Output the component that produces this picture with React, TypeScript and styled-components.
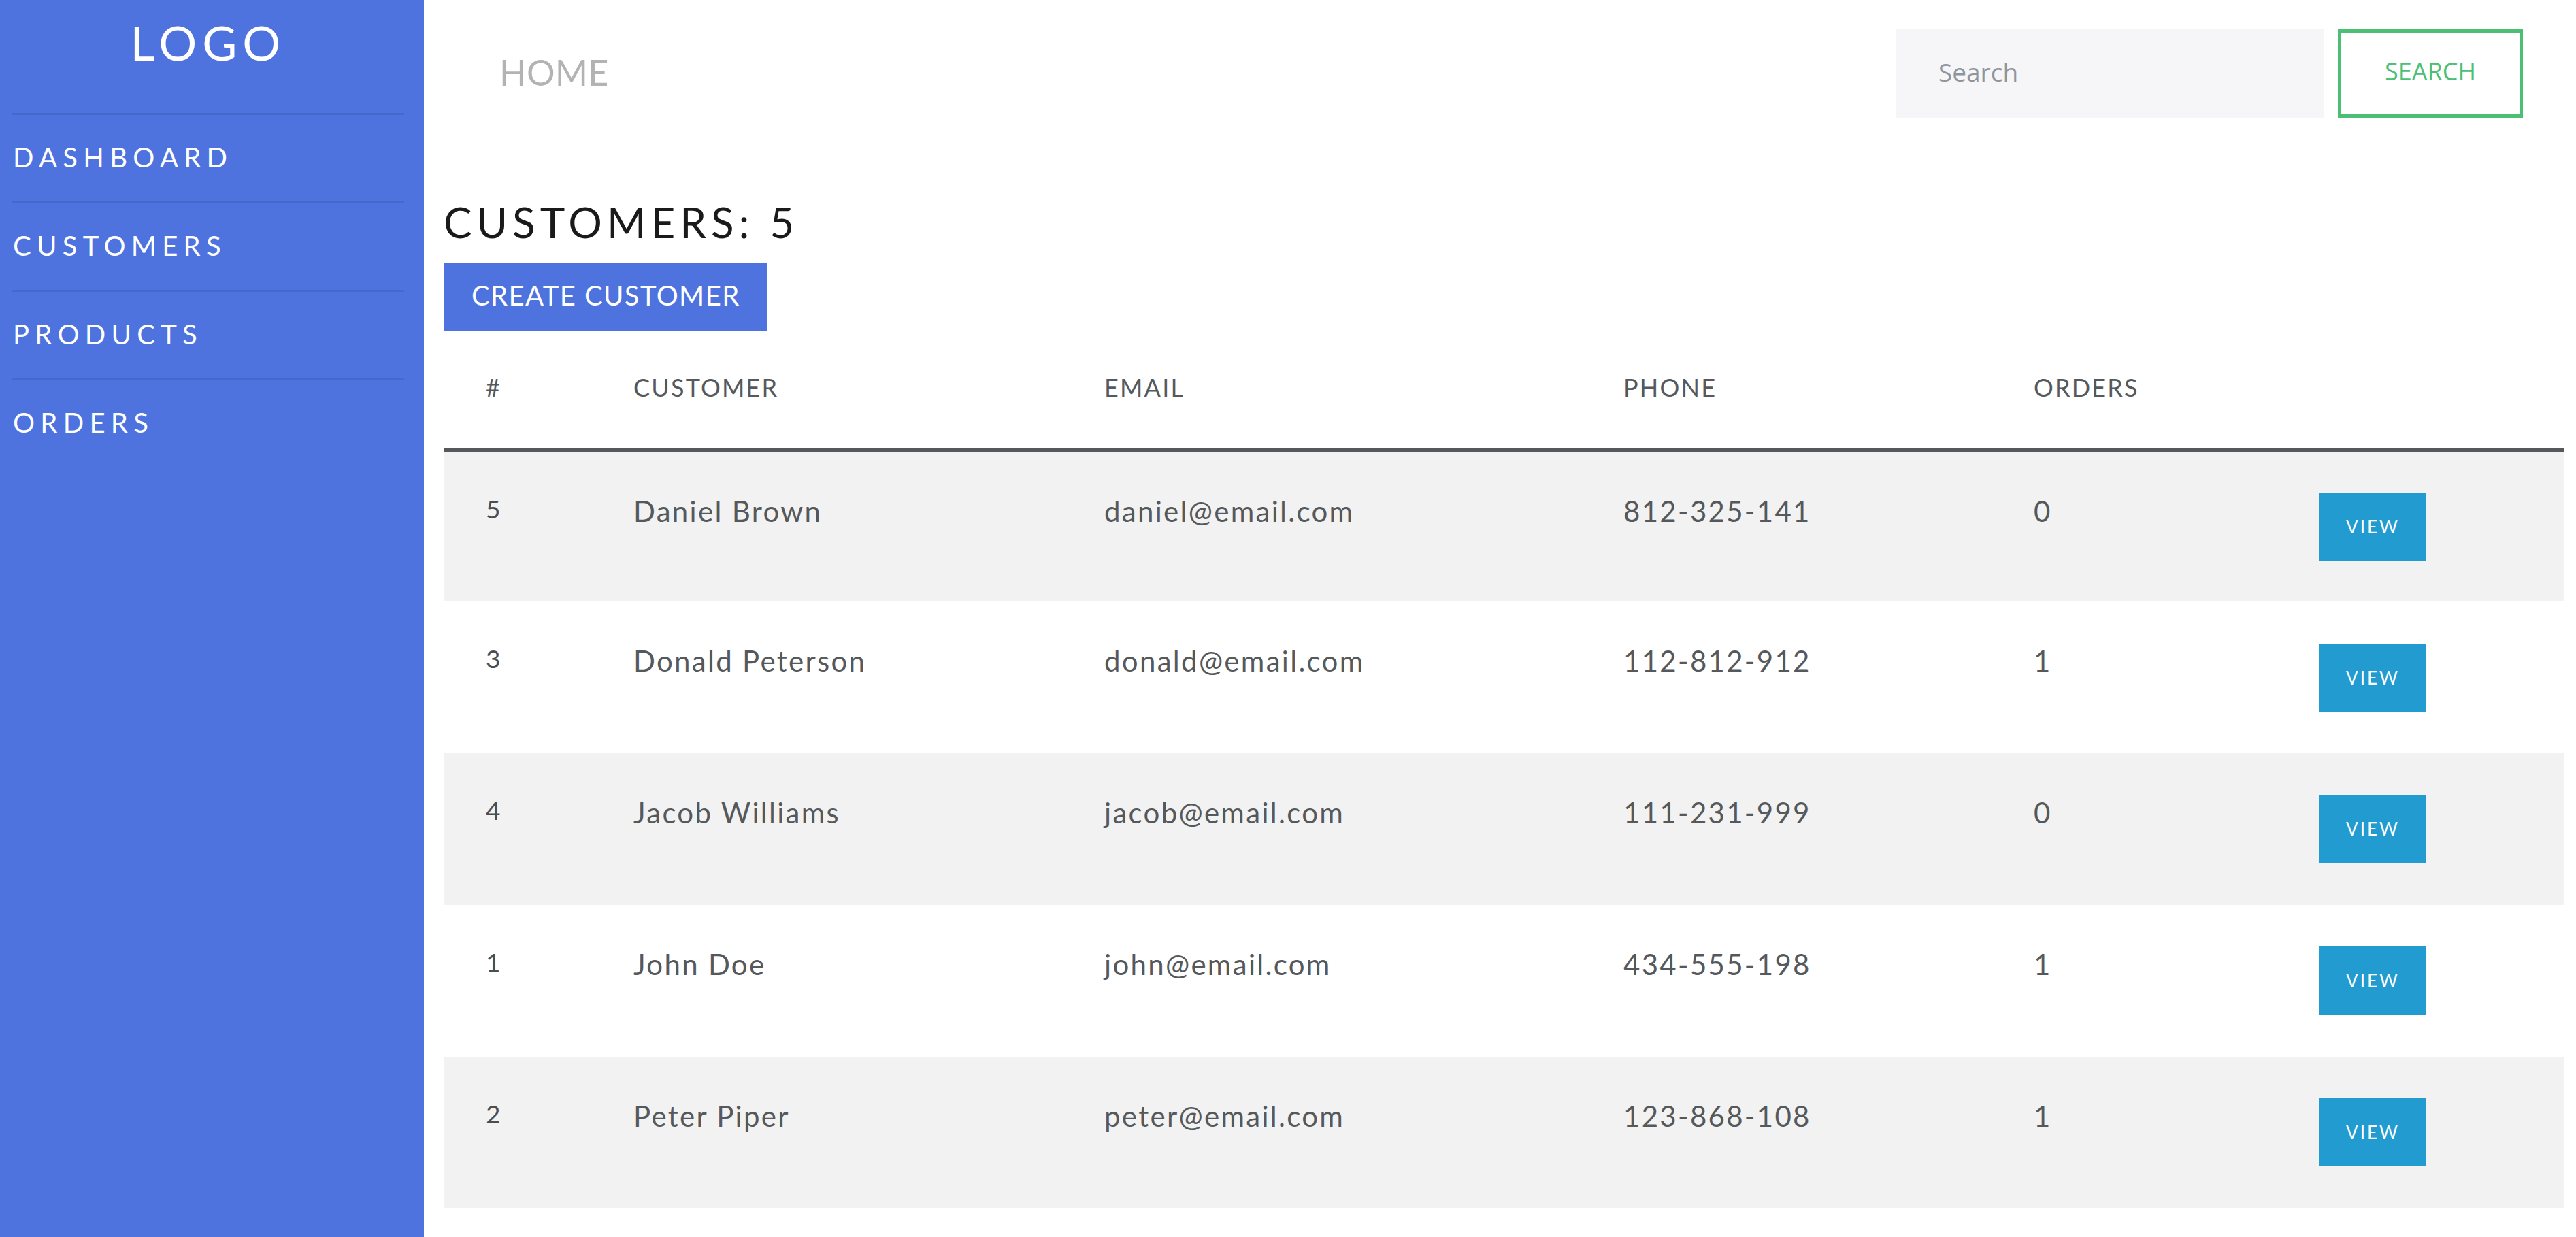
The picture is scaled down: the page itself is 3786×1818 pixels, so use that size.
import React from "react";
import styled, { createGlobalStyle } from "styled-components";

const GlobalStyle = createGlobalStyle`
  html, body {
    margin: 0;
    padding: 0;
    background: #ffffff;
  }
  body {
    font-family: Lato, "Open Sans", sans-serif;
    color: #55595c;
  }
  * { box-sizing: border-box; }
`;

const Layout = styled.div`
  display: flex;
  min-height: 100vh;
`;

const Sidebar = styled.aside`
  width: 623px;
  flex-shrink: 0;
  background: #4e73df;
  padding: 0 29px 0 18px;
`;

const Logo = styled.div`
  height: 166px;
  padding-top: 20px;
  text-align: center;
  font-size: 70px;
  line-height: 84px;
  letter-spacing: 8px;
  color: #ffffff;
`;

const NavList = styled.ul`
  list-style: none;
  margin: 0;
  padding: 0;
`;

const NavItem = styled.li`
  display: flex;
  align-items: center;
  height: 130px;
  padding: 0 0 4px 1px;
  border-top: 3px solid rgba(0, 0, 0, 0.09);
  color: #ffffff;
  font-size: 40px;
  letter-spacing: 8.3px;
`;

const Main = styled.main`
  flex: 1;
  min-width: 0;
  padding: 43px 18px 0 29px;
`;

const TopBar = styled.header`
  display: flex;
  align-items: center;
  height: 130px;
`;

const HomeLink = styled.a`
  margin: 0 0 4px 82px;
  font-size: 52px;
  letter-spacing: 0.2px;
  color: #b3b3b3;
  text-decoration: none;
`;

const SearchForm = styled.form`
  margin-left: auto;
  margin-right: 60px;
  display: flex;
  gap: 20px;
`;

const SearchInput = styled.input`
  width: 629px;
  height: 130px;
  border: none;
  outline: none;
  background: #f6f6f8;
  padding: 0 0 5px 62px;
  font-family: "Open Sans", sans-serif;
  font-size: 37px;
  color: #55595c;
  &::placeholder {
    color: #8e959d;
  }
`;

const SearchButton = styled.button`
  width: 272px;
  height: 130px;
  border: 5px solid #4bbf73;
  background: transparent;
  color: #4bbf73;
  font-family: "Open Sans", sans-serif;
  font-size: 36px;
  padding: 0 0 7px;
`;

const Title = styled.h1`
  margin: 116px 0 0;
  font-size: 62px;
  line-height: 74px;
  font-weight: 400;
  letter-spacing: 7px;
  color: #1a1a1a;
`;

const CreateButton = styled.button`
  margin-top: 23px;
  height: 100px;
  padding: 0 40px 4px 41px;
  border: none;
  background: #4e73df;
  color: #ffffff;
  font-family: Lato, sans-serif;
  font-size: 40px;
  letter-spacing: 1.4px;
`;

const Table = styled.table`
  width: 100%;
  border-collapse: collapse;
  table-layout: fixed;
`;

const Col = styled.col<{ $w: number }>`
  width: ${(p) => p.$w}px;
`;

const HeadCell = styled.th`
  text-align: left;
  font-weight: 400;
  font-size: 36px;
  line-height: 54px;
  letter-spacing: 2.2px;
  color: #55595c;
  padding: 56px 0 63px 62px;
  border-bottom: 5px solid #55595c;
`;

const Row = styled.tr<{ $striped: boolean }>`
  height: 222.8px;
  background: ${(p) => (p.$striped ? "#f2f2f2" : "#ffffff")};
`;

const IdCell = styled.th`
  text-align: left;
  vertical-align: top;
  font-weight: 400;
  font-size: 37px;
  line-height: 54px;
  color: #4a4e51;
  padding: 57px 0 0 62px;
`;

const Cell = styled.td`
  vertical-align: top;
  font-size: 42px;
  line-height: 63px;
  letter-spacing: 2.3px;
  color: #55595c;
  padding: 56px 0 0 62px;
`;

const ActionCell = styled.td`
  vertical-align: middle;
  padding: 0 0 0 62px;
`;

const ViewButton = styled.button`
  width: 157px;
  height: 100px;
  border: none;
  background: #219bd0;
  color: #ffffff;
  font-family: Lato, sans-serif;
  font-size: 26px;
  letter-spacing: 3px;
  padding: 0;
`;

const customers = [
  { id: 5, name: "Daniel Brown", email: "daniel@email.com", phone: "812-325-141", orders: 0 },
  { id: 3, name: "Donald Peterson", email: "donald@email.com", phone: "112-812-912", orders: 1 },
  { id: 4, name: "Jacob Williams", email: "jacob@email.com", phone: "111-231-999", orders: 0 },
  { id: 1, name: "John Doe", email: "john@email.com", phone: "434-555-198", orders: 1 },
  { id: 2, name: "Peter Piper", email: "peter@email.com", phone: "123-868-108", orders: 1 },
];

const colWidths = [217, 692, 763, 603, 420, 421];

export default function App() {
  return (
    <>
      <GlobalStyle />
      <Layout>
        <Sidebar>
          <Logo>LOGO</Logo>
          <NavList>
            <NavItem>DASHBOARD</NavItem>
            <NavItem>CUSTOMERS</NavItem>
            <NavItem>PRODUCTS</NavItem>
            <NavItem>ORDERS</NavItem>
          </NavList>
        </Sidebar>
        <Main>
          <TopBar>
            <HomeLink href="#">HOME</HomeLink>
            <SearchForm onSubmit={(e) => e.preventDefault()}>
              <SearchInput placeholder="Search" />
              <SearchButton type="submit">SEARCH</SearchButton>
            </SearchForm>
          </TopBar>
          <Title>CUSTOMERS: {customers.length}</Title>
          <CreateButton>CREATE CUSTOMER</CreateButton>
          <Table>
            <colgroup>
              {colWidths.map((w, i) => (
                <Col key={i} $w={w} />
              ))}
            </colgroup>
            <thead>
              <tr>
                <HeadCell>#</HeadCell>
                <HeadCell>CUSTOMER</HeadCell>
                <HeadCell>EMAIL</HeadCell>
                <HeadCell>PHONE</HeadCell>
                <HeadCell>ORDERS</HeadCell>
                <HeadCell />
              </tr>
            </thead>
            <tbody>
              {customers.map((c, i) => (
                <Row key={c.id} $striped={i % 2 === 0}>
                  <IdCell>{c.id}</IdCell>
                  <Cell>{c.name}</Cell>
                  <Cell>{c.email}</Cell>
                  <Cell>{c.phone}</Cell>
                  <Cell>{c.orders}</Cell>
                  <ActionCell>
                    <ViewButton>VIEW</ViewButton>
                  </ActionCell>
                </Row>
              ))}
            </tbody>
          </Table>
        </Main>
      </Layout>
    </>
  );
}
